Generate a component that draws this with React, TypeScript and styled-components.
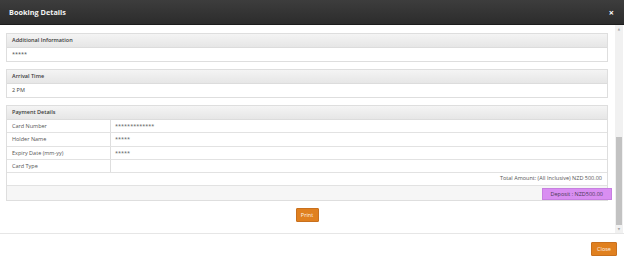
import styled, { createGlobalStyle } from 'styled-components';

const GlobalStyle = createGlobalStyle`
  *, *::before, *::after {
    box-sizing: border-box;
  }
  html, body {
    margin: 0;
    padding: 0;
    background: #ffffff;
  }
  body {
    font-family: 'Open Sans', 'DejaVu Sans', sans-serif;
    color: #444;
  }
`;

type Row = { label: string; value: string };

const cardRows: Row[] = [
  { label: 'Card Number', value: '*************' },
  { label: 'Holder Name', value: '*****' },
  { label: 'Expiry Date (mm-yy)', value: '*****' },
  { label: 'Card Type', value: '' },
];

const App = () => {
  return (
    <>
      <GlobalStyle />
      <Modal>
        <Header>
          <Title>Booking Details</Title>
          <CloseX>×</CloseX>
        </Header>
        <BodyWrap>
          <Content>
            <Panel>
              <PanelHead>Additional Information</PanelHead>
              <PanelRow>*****</PanelRow>
            </Panel>
            <Panel>
              <PanelHead>Arrival Time</PanelHead>
              <PanelRow>2 PM</PanelRow>
            </Panel>
            <Panel>
              <PanelHead>Payment Details</PanelHead>
              {cardRows.map((r) => (
                <TableRow key={r.label}>
                  <LabelCell>{r.label}</LabelCell>
                  <ValueCell>{r.value}</ValueCell>
                </TableRow>
              ))}
              <SumRow>Total Amount: (All Inclusive) NZD 500.00</SumRow>
              <SumRow $shade>
                <Deposit>Deposit : NZD500.00</Deposit>
              </SumRow>
            </Panel>
            <PrintBar>
              <OrangeButton>Print</OrangeButton>
            </PrintBar>
          </Content>
          <ScrollTrack>
            <ScrollArrow>▲</ScrollArrow>
            <ScrollThumb />
            <ScrollArrow>▼</ScrollArrow>
          </ScrollTrack>
        </BodyWrap>
        <Footer>
          <OrangeButton $wide>Close</OrangeButton>
        </Footer>
      </Modal>
    </>
  );
};

export default App;

const Modal = styled.div`
  width: 624px;
  height: 268px;
  display: flex;
  flex-direction: column;
  background: #fff;
  overflow: hidden;
`;

const Header = styled.div`
  height: 25px;
  flex: none;
  display: flex;
  align-items: center;
  justify-content: space-between;
  padding: 0 10px 0 9px;
  background: linear-gradient(#3d3d3d, #2c2c2c);
  border-bottom: 1px solid #1c1c1c;
`;

const Title = styled.div`
  color: #f2f2f2;
  font-size: 7.3px;
  font-weight: 700;
`;

const CloseX = styled.div`
  color: #ffffff;
  font-size: 9px;
  font-weight: 700;
  line-height: 1;
`;

const BodyWrap = styled.div`
  height: 209px;
  flex: none;
  display: flex;
  border-bottom: 1px solid #e6e6e6;
`;

const Content = styled.div`
  flex: 1;
  display: flex;
  flex-direction: column;
  gap: 7px;
  padding: 8px 7px 0 6px;
`;

const Panel = styled.div`
  border: 1px solid #dedede;
  display: flex;
  flex-direction: column;
`;

const PanelHead = styled.div`
  height: 14px;
  line-height: 13px;
  padding: 0 5px;
  font-size: 5.5px;
  font-weight: 600;
  color: #3a3a3a;
  background: linear-gradient(#f4f4f4, #e6e6e6);
  border-bottom: 1px solid #dcdcdc;
`;

const PanelRow = styled.div`
  height: 13px;
  line-height: 13px;
  padding: 0 5px;
  font-size: 5.5px;
  color: #444;
`;

const TableRow = styled.div`
  display: flex;
  height: 13.3px;
  border-bottom: 1px solid #e2e2e2;
  font-size: 5.5px;
  color: #555;
`;

const LabelCell = styled.div`
  width: 104px;
  flex: none;
  padding: 0 5px;
  display: flex;
  align-items: center;
  border-right: 1px solid #dedede;
`;

const ValueCell = styled.div`
  flex: 1;
  padding: 0 4px;
  display: flex;
  align-items: center;
`;

const SumRow = styled.div<{ $shade?: boolean }>`
  height: 13.3px;
  display: flex;
  align-items: flex-end;
  justify-content: flex-end;
  padding: 0 5px 3px;
  font-size: 5.5px;
  color: #555;
  background: ${(p) => (p.$shade ? '#f6f6f6' : '#fff')};
  border-bottom: ${(p) => (p.$shade ? 'none' : '1px solid #e2e2e2')};
`;

const Deposit = styled.div`
  margin: 0 -10px -3px 0;
  height: 12px;
  display: flex;
  align-items: center;
  padding: 0 8px 0 8px;
  background: #d98ef2;
  border: 1px solid #c77fe0;
  color: #4a3a55;
`;

const PrintBar = styled.div`
  display: flex;
  justify-content: center;
`;

const OrangeButton = styled.button<{ $wide?: boolean }>`
  height: 14px;
  width: ${(p) => (p.$wide ? '26px' : '23px')};
  padding: 0;
  border: 1px solid #c8701e;
  border-radius: 1px;
  background: #e0801f;
  color: #fff4e8;
  font-family: 'Open Sans', sans-serif;
  font-size: 5.5px;
  cursor: pointer;
`;

const ScrollTrack = styled.div`
  width: 8px;
  flex: none;
  display: flex;
  flex-direction: column;
  background: #f1f1f1;
  margin-right: 1px;
`;

const ScrollArrow = styled.div`
  height: 8px;
  flex: none;
  display: flex;
  align-items: center;
  justify-content: center;
  font-size: 3px;
  color: #a3a3a3;
`;

const ScrollThumb = styled.div`
  margin: auto 1px 0;
  height: 88px;
  background: #c2c2c2;
`;

const Footer = styled.div`
  flex: 1;
  display: flex;
  justify-content: flex-end;
  align-items: flex-start;
  padding: 8px 7px 0 0;
`;
